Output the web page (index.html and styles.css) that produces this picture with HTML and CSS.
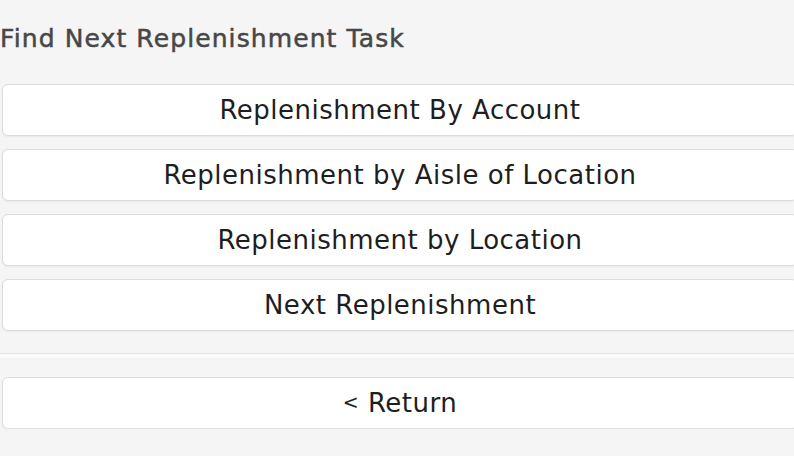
FILE: index.html
```html
<!DOCTYPE html>
<html lang="en">
  <head>
    <meta charset="UTF-8" />
    <meta name="viewport" content="width=device-width, initial-scale=1.0" />
    <title>Find Next Replenishment Task</title>
    <link rel="stylesheet" href="styles.css">
  </head>
  <body>
    <div class="screen">
      <h1 class="title">Find Next Replenishment Task</h1>

      <div class="menu">
        <button type="button" class="menu-button">Replenishment By Account</button>
        <button type="button" class="menu-button">Replenishment by Aisle of Location</button>
        <button type="button" class="menu-button">Replenishment by Location</button>
        <button type="button" class="menu-button">Next Replenishment</button>
      </div>

      <hr class="divider" />

      <div class="menu">
        <button type="button" class="menu-button"><span class="chevron">&lt;</span> Return</button>
      </div>
    </div>
  </body>
</html>
```

FILE: styles.css
```css
body {
  font-family: "DejaVu Sans", Arial, sans-serif;
  margin: 0;
  padding: 0;
  background-color: #f5f5f5;
  overflow: hidden;
}
.screen {
  padding-top: 24px;
}
.title {
  margin: 0 0 30px 0;
  font-size: 25px;
  font-weight: normal;
  letter-spacing: 1.1px;
  -webkit-text-stroke: 0.5px #474747;
  color: #474747;
  line-height: 30px;
}
.menu {
  display: flex;
  flex-direction: column;
  gap: 13px;
  margin: 0 -4px 0 2px;
}
.menu-button {
  height: 52px;
  background: #fff;
  border: 1px solid #dcdcdc;
  border-radius: 6px;
  box-shadow: 0 1px 2px rgba(0, 0, 0, 0.05);
  font-family: inherit;
  font-size: 26px;
  letter-spacing: 0.5px;
  color: #1e1e1e;
  cursor: pointer;
}
.chevron {
  font-size: 19px;
  vertical-align: 3px;
}
.divider {
  margin: 22px 0 19px 0;
  height: 4px;
  border: none;
  border-top: 1px solid #e4e4e4;
  background: #fafafa;
}
```
